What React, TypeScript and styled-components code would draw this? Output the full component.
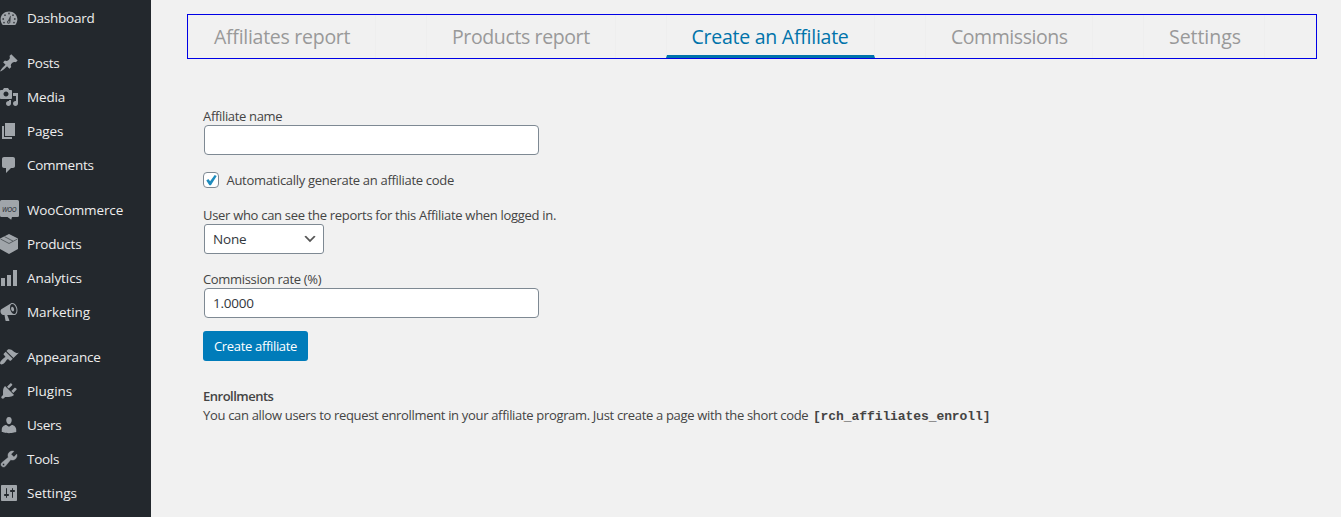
import React from "react";
import styled, { createGlobalStyle } from "styled-components";

const GlobalStyle = createGlobalStyle`
  *, *::before, *::after { box-sizing: border-box; }
  body {
    margin: 0;
    background: #f1f1f1;
    color: #444;
    font: 13px/18px "Open Sans", "Noto Sans", sans-serif;
    overflow: hidden;
  }
`;

const Page = styled.div`
  display: flex;
  height: 517px;
`;

const Sidebar = styled.nav`
  flex: 0 0 151px;
  background: #23282d;
  padding-top: 1px;
  overflow: hidden;
`;

const MenuGroup = styled.div`
  margin-bottom: 11px;
`;

const MenuItem = styled.a<{ $spacing: number }>`
  display: flex;
  align-items: center;
  height: 34px;
  gap: 8px;
  color: #eee;
  font-size: 13.5px;
  letter-spacing: ${(p) => p.$spacing}px;
  white-space: nowrap;
`;

const MenuIcon = styled.svg`
  flex: none;
  width: 20px;
  height: 20px;
  margin-left: -1px;
  fill: #a0a5aa;
`;

const Main = styled.main`
  flex: 1;
  padding: 14px 24px 0 36px;
`;

const TabBar = styled.div`
  display: flex;
  gap: 50px;
  height: 45px;
  border: 1px solid #0000e6;
`;

const Tab = styled.a<{ $width: number; $spacing: number; $active?: boolean }>`
  width: ${(p) => p.$width}px;
  height: 43px;
  padding-left: ${(p) => (p.$active ? 24.5 : 25)}px;
  border: 1px solid #eee;
  border-top: 0;
  border-bottom: ${(p) => (p.$active ? "3px solid #0073aa" : "0")};
  color: ${(p) => (p.$active ? "#0073aa" : "#999")};
  font-size: 19.5px;
  line-height: 44px;
  letter-spacing: ${(p) => p.$spacing}px;
  white-space: nowrap;
`;

const Form = styled.form`
  display: flex;
  flex-direction: column;
  align-items: flex-start;
  padding: 48px 0 0 16px;
`;

const Line = styled.span<{ $spacing?: number }>`
  letter-spacing: ${(p) => p.$spacing ?? 0}px;
  white-space: nowrap;
`;

const Field = styled.label`
  display: flex;
  flex-direction: column;
  margin-bottom: 16px;
`;

const TextInput = styled.input`
  width: 335px;
  height: 30px;
  margin: 0 1px;
  padding: 0 8px;
  border: 1px solid #7e8993;
  border-radius: 4px;
  background: #fff;
  color: #32373c;
  font: 13.5px "Open Sans", sans-serif;
  letter-spacing: -0.25px;
  outline: none;
`;

const SelectBox = styled.div`
  display: flex;
  align-items: center;
  justify-content: space-between;
  width: 120px;
  height: 30px;
  margin-left: 1px;
  padding: 0 5px 0 8px;
  border: 1px solid #7e8993;
  border-radius: 3px;
  background: #fff;
  color: #32373c;
  font-size: 13.5px;
  letter-spacing: -0.15px;
`;

const CheckRow = styled.label`
  display: flex;
  align-items: center;
  gap: 7.5px;
  height: 18px;
  margin-bottom: 17px;
`;

const CheckBox = styled.span`
  display: flex;
  width: 16px;
  height: 16px;
  border: 1px solid #7e8993;
  border-radius: 4px;
  background: #fff;
`;

const SubmitButton = styled.button`
  width: 105px;
  height: 30px;
  margin-top: -3px;
  padding: 0;
  border: 0;
  border-radius: 3px;
  background: #007cba;
  color: #fff;
  font: 13px "Open Sans", sans-serif;
  letter-spacing: -0.33px;
`;

const Enrollments = styled.section`
  padding: 26px 0 0 16px;
  line-height: 19px;
`;

const Heading = styled.div`
  font-weight: 600;
  letter-spacing: -0.5px;
`;

const Shortcode = styled.code`
  margin-left: 1.5px;
  font: bold 13px "Courier New", "Liberation Mono", monospace;
  letter-spacing: -0.08px;
`;

const icons: Record<string, React.ReactNode> = {
  Dashboard: (
    <>
      <path d="M3.76 17h12.48c1.34-1.53 2.16-3.49 2.16-5.66C18.4 6.74 14.62 3.5 10 3.5S1.6 6.74 1.6 11.34c0 2.17.82 4.13 2.16 5.66z" />
      <g fill="#3a3f44">
        <circle cx="10" cy="5.5" r=".9" />
        <circle cx="6" cy="7.2" r=".9" />
        <circle cx="14" cy="7.2" r=".9" />
        <circle cx="4.2" cy="11" r=".9" />
        <circle cx="15.8" cy="11" r=".9" />
        <circle cx="5" cy="14.6" r=".9" />
        <circle cx="15" cy="14.6" r=".9" />
        <path d="M11.3 7.8l.5.2-.4 5.6a1.7 1.7 0 1 1-2.3-1.2z" />
      </g>
      <circle cx="9.8" cy="14" r=".8" />
    </>
  ),
  Posts: <path d="M10.44 3.02l1.82-1.82 6.36 6.35-1.83 1.82c-1.05-.68-2.48-.57-3.41.36l-.75.75c-.92.93-1.04 2.35-.35 3.41l-1.83 1.82-2.41-2.41-2.8 2.79c-.42.42-3.38 2.71-3.8 2.29s1.86-3.39 2.28-3.81l2.79-2.79L4.1 9.36l1.83-1.82c1.05.69 2.48.57 3.4-.36l.75-.75c.93-.92 1.05-2.35.36-3.41z" />,
  Media: <path fillRule="evenodd" d="M13 11V4c0-.55-.45-1-1-1h-1.67L9 1H5L3.67 3H2c-.55 0-1 .45-1 1v7c0 .55.45 1 1 1h10c.55 0 1-.45 1-1zM7 4.5c1.38 0 2.5 1.12 2.5 2.5S8.38 9.5 7 9.5 4.5 8.38 4.5 7 5.62 4.5 7 4.5zM14 6h5v10.5c0 1.38-1.12 2.5-2.5 2.5S14 17.88 14 16.5s1.12-2.5 2.5-2.5c.17 0 .34.02.5.05V9h-3V6zm-4 8.05V13h2v3.5c0 1.38-1.12 2.5-2.5 2.5S7 17.88 7 16.5 8.12 14 9.5 14c.17 0 .34.02.5.05z" />,
  Pages: <path d="M6 15V2h10v13H6zm-1 1h8v2H3V5h2v11z" />,
  Comments: <path d="M5 2h9c1.1 0 2 .9 2 2v7c0 1.1-.9 2-2 2h-2l-5 5v-5H5c-1.1 0-2-.9-2-2V4c0-1.1.9-2 2-2z" />,
  WooCommerce: (
    <>
      <path d="M2.5 0h16A1.5 1.5 0 0 1 20 1.5v14a1.5 1.5 0 0 1-1.5 1.5h-5.5l-.8 2.8-3.7-2.8h-6A1.5 1.5 0 0 1 1 15.5v-14A1.5 1.5 0 0 1 2.5 0z" />
      <text x="10" y="11.5" textAnchor="middle" fontFamily="Open Sans" fontSize="6.6" fontStyle="italic" letterSpacing="-0.3" fill="#23282d">WOO</text>
    </>
  ),
  Products: (
    <>
      <path d="M10 0l9 4.5v10.5l-9 5-9-5V4.5z" />
      <path d="M1.5 5l8.5 4.5L18.5 5M5.5 2.6l8.5 4.5" fill="none" stroke="#3a3f44" strokeWidth=".7" />
    </>
  ),
  Analytics: <path d="M18 18V2h-4v16h4zm-6 0V7H8v11h4zm-6 0v-8H2v8h4z" />,
  Marketing: <path fillRule="evenodd" d="M18.15 5.94c.46 1.62.38 3.22-.02 4.48-.42 1.28-1.26 2.18-2.3 2.48-.16.06-.26.06-.4.06-.06.02-.12.02-.18.02-.06.02-.14.02-.22.02h-6.8l2.22 5.5c.02.14-.06.26-.14.34-.08.1-.24.16-.34.16H6.95c-.1 0-.26-.06-.34-.16-.08-.08-.16-.2-.14-.34l-1-5.5H4.25l-.02-.02c-.5.06-1.08-.18-1.54-.62s-.88-1.08-1.06-1.88c-.24-.8-.2-1.56-.02-2.2.18-.62.58-1.08 1.06-1.3l.02-.02 9-5.4c.1-.06.18-.1.24-.16.06-.04.14-.08.24-.12.16-.08.28-.12.5-.18 1.04-.3 2.24.1 3.22.98s1.84 2.24 2.26 3.86zm-2.58 5.98h-.02c.4-.1.74-.34 1.04-.7.58-.7.86-1.76.86-3.04 0-.64-.1-1.3-.28-1.98-.34-1.36-1.02-2.5-1.78-3.24s-1.68-1.1-2.46-.88c-.82.22-1.4.96-1.7 2-.32 1.04-.28 2.36.06 3.72.38 1.36 1 2.5 1.8 3.24.78.74 1.62 1.1 2.48.88zm-2.54-7.08c.22-.04.42-.02.62.04.38.16.76.48 1.02 1s.42 1.2.42 1.78c0 .3-.04.56-.12.8-.18.48-.44.84-.86.94-.34.1-.8-.06-1.14-.4s-.64-.86-.78-1.5c-.18-.62-.12-1.24.02-1.72s.48-.84.82-.94z" />,
  Appearance: <path d="M14.48 11.06L7.41 3.99l1.5-1.5c.5-.56 2.3-.47 3.51.32 1.21.8 1.43 1.28 2.91 2.1 1.18.64 2.45 1.26 4.45.85zm-.71.71L6.7 4.7 4.93 6.47c-.39.39-.39 1.02 0 1.41l1.06 1.06c.39.39.39 1.03 0 1.42-.6.6-1.43 1.11-2.21 1.69-.35.26-.7.53-1.01.84C1.43 14.23.4 16.08 1.4 17.07c.99 1 2.84-.03 4.18-1.36.31-.31.58-.66.85-1.02.57-.78 1.08-1.61 1.69-2.21.39-.39 1.02-.39 1.41 0l1.06 1.06c.39.39 1.02.39 1.41 0z" />,
  Plugins: <path d="M13.11 4.36L9.87 7.6 8 5.73l3.24-3.24c.35-.34 1.05-.2 1.56.32.52.51.66 1.21.31 1.55zm-8 1.77l.91-1.12 9.01 9.01-1.19.84c-.71.71-2.63 1.16-3.82 1.16H6.14L4.9 17.26c-.59.59-1.54.59-2.12 0-.59-.58-.59-1.53 0-2.12l1.24-1.24v-3.88c0-1.13.4-3.19 1.09-3.89zm7.26 3.97l3.24-3.24c.34-.35 1.04-.21 1.55.31.52.51.66 1.21.31 1.55l-3.24 3.25z" />,
  Users: <path d="M10 9.25c-2.27 0-2.73-3.44-2.73-3.44C7 4.02 7.82 2 9.97 2c2.16 0 2.98 2.02 2.71 3.81 0 0-.41 3.44-2.68 3.44zm0 2.57L12.72 10c2.39 0 4.52 2.33 4.52 4.53v2.49s-3.65 1.13-7.24 1.13c-3.65 0-7.24-1.13-7.24-1.13v-2.49c0-2.25 1.94-4.48 4.47-4.48z" />,
  Tools: <path fillRule="evenodd" stroke="#a0a5aa" strokeWidth=".4" d="M16.68 9.77c-1.34 1.34-3.3 1.67-4.95.99l-5.41 6.52c-.99.99-2.59.99-3.58 0s-.99-2.59 0-3.57l6.52-5.42c-.68-1.65-.35-3.61.99-4.95 1.28-1.28 3.12-1.62 4.72-1.06l-2.89 2.89 2.82 2.82 2.86-2.87c.53 1.58.18 3.39-1.08 4.65zM3.81 16.21c.4.39 1.04.39 1.43 0 .4-.4.4-1.04 0-1.43-.39-.4-1.03-.4-1.43 0-.39.39-.39 1.03 0 1.43z" />,
  Settings: <path fillRule="evenodd" d="M18 17V3c0-.55-.45-1-1-1H3c-.55 0-1 .45-1 1v14c0 .55.45 1 1 1h14c.55 0 1-.45 1-1zM8 11h1c.55 0 1 .45 1 1s-.45 1-1 1H8v1.5c0 .28-.22.5-.5.5s-.5-.22-.5-.5V13H6c-.55 0-1-.45-1-1s.45-1 1-1h1V5.5c0-.28.22-.5.5-.5s.5.22.5.5V11zm5-2h-1c-.55 0-1-.45-1-1s.45-1 1-1h1V5.5c0-.28.22-.5.5-.5s.5.22.5.5V7h1c.55 0 1 .45 1 1s-.45 1-1 1h-1v5.5c0 .28-.22.5-.5.5s-.5-.22-.5-.5V9z" />,
};

const menu: [string, number][][] = [
  [["Dashboard", -0.25]],
  [["Posts", -0.3], ["Media", -0.15], ["Pages", -0.15], ["Comments", -0.25]],
  [["WooCommerce", -0.12], ["Products", -0.2], ["Analytics", -0.08], ["Marketing", -0.08]],
  [["Appearance", -0.18], ["Plugins", 0], ["Users", -0.3], ["Tools", -0.3], ["Settings", 0]],
];

const tabs: [string, number, number][] = [
  ["Affiliates report", 188, -0.27],
  ["Products report", 190, -0.38],
  ["Create an Affiliate", 209, -0.25],
  ["Commissions", 168, -0.45],
  ["Settings", 122, -0.05],
];

export default function App() {
  return (
    <>
      <GlobalStyle />
      <Page>
        <Sidebar>
          {menu.map((group, i) => (
            <MenuGroup key={i}>
              {group.map(([name, spacing]) => (
                <MenuItem key={name} $spacing={spacing}>
                  <MenuIcon viewBox="0 0 20 20">{icons[name]}</MenuIcon>
                  <span>{name}</span>
                </MenuItem>
              ))}
            </MenuGroup>
          ))}
        </Sidebar>
        <Main>
          <TabBar>
            {tabs.map(([name, width, spacing], i) => (
              <Tab key={name} $width={width} $spacing={spacing} $active={i === 2}>
                {name}
              </Tab>
            ))}
          </TabBar>
          <Form>
            <Field>
              <Line $spacing={-0.33}>Affiliate name</Line>
              <TextInput />
            </Field>
            <CheckRow>
              <CheckBox>
                <svg width="14" height="14" viewBox="0 0 14 14">
                  <path d="M2.3 7.4l2-1.3 1.8 2.2 4.6-6.3 2 1-5.8 9.3H5.4z" fill="#1e8cbe" />
                </svg>
              </CheckBox>
              <Line $spacing={-0.3}>Automatically generate an affiliate code</Line>
            </CheckRow>
            <Field>
              <Line $spacing={-0.3}>User who can see the reports for this Affiliate when logged in.</Line>
              <SelectBox>
                None
                <svg width="16" height="16" viewBox="0 0 20 20">
                  <path d="M5 6l5 5 5-5 2 1-7 7-7-7z" fill="#555" />
                </svg>
              </SelectBox>
            </Field>
            <Field>
              <Line $spacing={-0.33}>Commission rate (%)</Line>
              <TextInput defaultValue="1.0000" />
            </Field>
            <SubmitButton type="button">Create affiliate</SubmitButton>
          </Form>
          <Enrollments>
            <Heading>Enrollments</Heading>
            <Line $spacing={-0.325}>
              You can allow users to request enrollment in your affiliate program. Just create a page with the short code{" "}
              <Shortcode>[rch_affiliates_enroll]</Shortcode>
            </Line>
          </Enrollments>
        </Main>
      </Page>
    </>
  );
}
